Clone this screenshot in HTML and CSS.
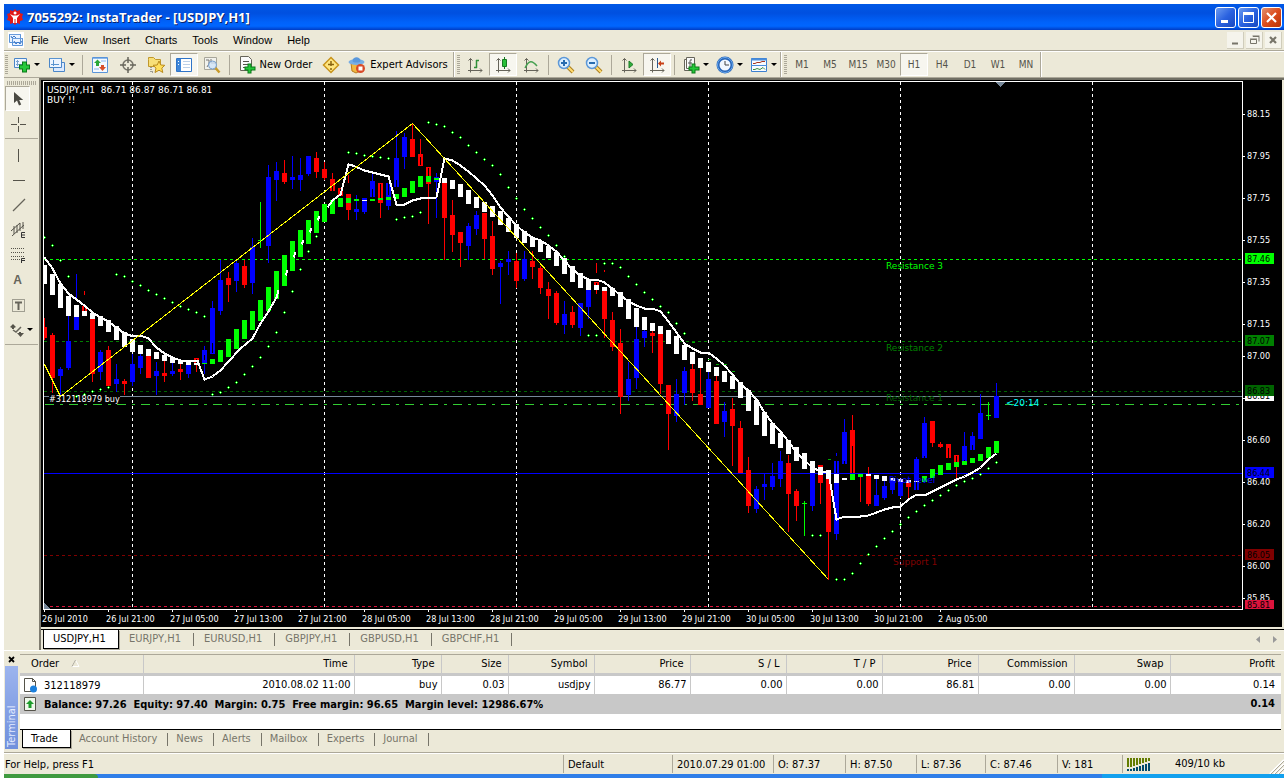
FILE: index.html
```html
<!DOCTYPE html>
<html lang="en">
<head>
<meta charset="utf-8">
<title>7055292: InstaTrader - [USDJPY,H1]</title>
<link rel="stylesheet" href="styles.css">
</head>
<body>
<div class="window">
  <header class="titlebar">
    <svg class="logo" width="16" height="16" viewBox="0 0 16 16"><path d="M8 0l2 2 3-1v3l3 1-1 3 1 3-3 1v3l-3-1-2 2-2-2-3 1v-3l-3-1 1-3-1-3 3-1v-3l3 1z" fill="#e01818"/><path d="M3 5l3 1.500h4l3-1.500-3 4v5H8.500v-4h-1v4H6V9zM8 2.500a1.500 1.500 0 1 0 .1 0z" fill="#fff"/></svg>
    <h1>7055292: InstaTrader - [USDJPY,H1]</h1>
    <button class="cap" aria-label="Minimize"><svg width="19" height="19"><path d="M5 13.500h7" stroke="#fff" stroke-width="3"/></svg></button>
    <button class="cap" aria-label="Maximize"><svg width="19" height="19"><path d="M4 5.500h11" stroke="#fff" stroke-width="3"/><path d="M4.500 5v9.500h10V5" fill="none" stroke="#fff"/></svg></button>
    <button class="cap close" aria-label="Close"><svg width="19" height="19"><path d="M5 5l9 9M14 5l-9 9" stroke="#fff" stroke-width="2.200"/></svg></button>
  </header>

  <nav class="menubar">
    <svg class="menu-icon" width="16" height="16"><path fill="#fff" d="M0 0h16v16H0z"/><path d="M1.500 2.500h11v8h-11zM4.500 6.500h10v7h-10z" fill="#eaf3ff" stroke="#5a94d8"/><path d="M1 2.500h12M4 6.500h11" stroke="#6a9cdc"/><path d="M6 9l2 3 2-2 2 2 2-3M3 4l1 2 2-2 2 2" fill="none" stroke="#3c78c8"/></svg>
    <button>File</button><button>View</button><button>Insert</button><button>Charts</button><button>Tools</button><button>Window</button><button>Help</button>
    <span class="fill"></span>
    <button class="mdi" aria-label="Minimize chart"><svg width="17" height="17"><path d="M5 11.500h6" stroke="#77756a" stroke-width="2"/></svg></button>
    <button class="mdi" aria-label="Restore chart"><svg width="17" height="17"><path d="M4.500 7.500h6v4h-6zM4 7h7M7 4.500h6v5M6.500 4h7" fill="none" stroke="#77756a"/></svg></button>
    <button class="mdi" aria-label="Close chart"><svg width="17" height="17"><path d="M5 5l6 6M11 5l-6 6" stroke="#77756a" stroke-width="2.200"/></svg></button>
  </nav>

  <div class="toolbar">
    <div class="group">
      <i class="grip"></i>
      <button class="drop" aria-label="New chart"><svg width="18" height="18"><path d="M1.500 2.500h12v9h-12z" fill="#eef5ff" stroke="#4a86c8"/><path d="M4.500 4v6M3 8.500h7M3 5.500h3" stroke="#78a2d0"/><path d="M11.500 5.500v11M6 11h11" stroke="#0b7a18" stroke-width="5"/><path d="M11.500 6.500v9M7 11h9" stroke="#25c83a" stroke-width="3"/></svg></button>
      <button class="drop" aria-label="Profiles"><svg width="18" height="18"><path d="M5.500 6.500h11v9h-11z" fill="#dceaff" stroke="#4a86c8"/><path d="M1.500 2.500h12v9h-12z" fill="#eef5ff" stroke="#4a86c8"/><path d="M1 2.500h13M3 8.500h8M5.500 4v6" stroke="#5a94d0"/></svg></button>
      <i class="sep"></i>
      <button aria-label="Market watch"><svg width="16" height="16"><path d="M.5.5h15v15H.5z" fill="#f4f9ff" stroke="#5a94d8"/><path d="M1 1.500h14M9 4h5M2 12h5" stroke="#8ab8ec"/><path d="M5.500 2.500L9 6H7v3H4V6H2z" fill="#2aa838"/><path d="M10.500 14l3.500-4h-2V8H9v2H7z" fill="#d8502a"/></svg></button>
      <button aria-label="Data window"><svg width="18" height="18"><circle cx="9" cy="9" r="5" fill="none" stroke="#77756a" stroke-width="1.500"/><path d="M9 1v6M9 11v6M1 9h6M11 9h6" stroke="#66645a" stroke-width="1.500"/></svg></button>
      <button aria-label="Navigator"><svg width="18" height="18"><path d="M1.500 3.500V1.500h5l2 2h5v7h-12z" fill="#f8df78" stroke="#c0982c"/><path d="M4 11v5h3" fill="none" stroke="#555" stroke-dasharray="1 1"/><path d="M12 5l1.800 4 4 .3-3 2.800 1 4.400-3.800-2.300L8 16.500l1-4.400-3-2.800 4.200-.3z" fill="#ffdf5c" stroke="#b98a1c"/></svg></button>
      <button class="on" aria-label="Terminal"><svg width="16" height="16"><path d="M.5 1.500h15v13H.5z" fill="#fff" stroke="#2f74c8"/><path d="M1 2h4v12H1z" fill="#3f86d8"/><path d="M7 4.500h7M7 7.500h7M7 10.500h7" stroke="#bcd0e8"/><path d="M2 4.500h1M2 7.500h1" stroke="#fff"/></svg></button>
      <button aria-label="Strategy tester"><svg width="18" height="18"><path d="M1.500 1.500h12v12h-12z" fill="#f2f2ec" stroke="#a8a69a"/><path d="M3 4h3v5M8 3v4h4M4 11l3-5" fill="none" stroke="#777"/><circle cx="9.500" cy="9" r="4" fill="#cfe4fa" fill-opacity=".8" stroke="#7aa0cc"/><path d="M12.500 12l4 4.500" stroke="#c89a28" stroke-width="2.500"/></svg></button>
      <i class="sep"></i>
      <button class="label order"><svg width="18" height="18"><path d="M2.500.5h8l3 3v11h-11z" fill="#fafafa" stroke="#66645a"/><path d="M5 5.500h6M5 8.500h6M5 11.500h4" stroke="#55534a"/><path d="M11.500 7.500v10M6.500 12.500h11" stroke="#0b7a18" stroke-width="4"/><path d="M11.500 8.500v8M7.500 12.500h9" stroke="#25c83a" stroke-width="2"/></svg>New Order</button>
      <button aria-label="Metaeditor"><svg width="18" height="18"><path d="M9 1.500L16.500 9 9 16.500 1.500 9z" fill="#ffe680" stroke="#c8941c" stroke-width="1.500"/><path d="M9 5v5M6 8.500h6M9 12v2" stroke="#8a6410" stroke-width="1.500"/></svg></button>
      <button class="label advisors"><svg width="18" height="18"><path d="M3 7l9 1v7l-4 2-4-2z" fill="#f0b840" stroke="#b97a1c"/><ellipse cx="8.500" cy="6" rx="8" ry="3" fill="#78aee4"/><path d="M4.500 5c0-5 8-5 8 0 0 2-8 2-8 0z" fill="#5a98dc"/><circle cx="12.500" cy="12.500" r="4.500" fill="#d84a28"/><path d="M10.500 10.500h4v4h-4z" fill="#fff"/></svg>Expert Advisors</button>
    </div>
    <div class="group">
      <i class="grip"></i>
      <button aria-label="Bar chart"><svg width="16" height="16"><path d="M3.500 1.500v14M1 13.500h14M1.500 3.500l2-2 2 2M13 11.500l2 2-2 2" fill="none" stroke="#66645a"/><path d="M9.500 3v8M9 3.500h3M7 10.500h3" stroke="#2f9038" stroke-width="1.500"/></svg></button>
      <button class="on" aria-label="Candlesticks"><svg width="16" height="16"><path d="M3.500 1.500v14M1 13.500h14M1.500 3.500l2-2 2 2M13 11.500l2 2-2 2" fill="none" stroke="#66645a"/><path d="M9.500 0v12" stroke="#167a20"/><path d="M7.500 2.500h4v7h-4z" fill="#28c038" stroke="#167a20"/></svg></button>
      <button aria-label="Line chart"><svg width="16" height="16"><path d="M3.500 1.500v14M1 13.500h14M1.500 3.500l2-2 2 2M13 11.500l2 2-2 2" fill="none" stroke="#66645a"/><path d="M2 11C6 3 9 3 14 9" fill="none" stroke="#45a050" stroke-width="1.500"/></svg></button>
      <i class="sep"></i>
      <button aria-label="Zoom in"><svg width="18" height="18"><path d="M10 10l6 6" stroke="#ad8120" stroke-width="4"/><path d="M10 10l6 6" stroke="#ffdc70" stroke-width="2"/><circle cx="7" cy="7" r="5.500" fill="#dcefff" stroke="#5c98d8" stroke-width="1.500"/><path d="M4 7h6M7 4v6" stroke="#276cb0" stroke-width="2"/></svg></button>
      <button aria-label="Zoom out"><svg width="18" height="18"><path d="M10 10l6 6" stroke="#ad8120" stroke-width="4"/><path d="M10 10l6 6" stroke="#ffdc70" stroke-width="2"/><circle cx="7" cy="7" r="5.500" fill="#dcefff" stroke="#5c98d8" stroke-width="1.500"/><path d="M4 7h6" stroke="#276cb0" stroke-width="2"/></svg></button>
      <i class="sep"></i>
      <button aria-label="Auto scroll"><svg width="16" height="16"><path d="M3.500 1.500v14M1 13.500h14M1.500 3.500l2-2 2 2M13 11.500l2 2-2 2" fill="none" stroke="#66645a"/><path d="M8 4l4 3.500L8 11z" fill="#2fae3c" stroke="#1c7a26"/></svg></button>
      <button class="on" aria-label="Chart shift"><svg width="16" height="16"><path d="M3.500 1.500v14M1 13.500h14M1.500 3.500l2-2 2 2M13 11.500l2 2-2 2" fill="none" stroke="#66645a"/><path d="M8.500 1v10" stroke="#2a5a90"/><path d="M9 6.500l3-3v2h3v2h-3v2z" fill="#c84018"/></svg></button>
      <i class="sep"></i>
      <button class="drop" aria-label="Indicators"><svg width="18" height="18"><path d="M2.500 3.500v11h8v-11z" fill="#fafafa" stroke="#66645a"/><path d="M4.500 1.500h8v11h-8z" fill="#fafafa" stroke="#66645a"/><path d="M8 11V5q0-2 2-1M6 7h4" fill="none" stroke="#555"/><path d="M11.500 7.500v10M6.500 12.500h11" stroke="#0b7a18" stroke-width="4"/><path d="M11.500 8.500v8M7.500 12.500h9" stroke="#25c83a" stroke-width="2"/></svg></button>
      <button class="drop" aria-label="Periods"><svg width="18" height="18"><circle cx="9" cy="9" r="7" fill="#f0f7ff" stroke="#2664b8" stroke-width="3"/><circle cx="9" cy="9" r="7.500" fill="none" stroke="#69a8ec"/><path d="M9 5v4h4" fill="none" stroke="#444"/></svg></button>
      <button class="drop" aria-label="Templates"><svg width="18" height="18"><path d="M1.500 2.500h15v13h-15z" fill="#f8fbff" stroke="#3c80d0"/><path d="M1 3.500h16" stroke="#4a8edc" stroke-width="2"/><path d="M1 9.500h16" stroke="#4a8edc"/><path d="M3 7.500h2l2-1h3l2-1h3" fill="none" stroke="#a83820"/><path d="M3 13.500h2l2-1 3 1 3-2 2 2" fill="none" stroke="#3c9040"/></svg></button>
    </div>
    <div class="group periods">
      <i class="grip"></i>
      <button>M1</button><button>M5</button><button>M15</button><button>M30</button><button class="on">H1</button><button>H4</button><button>D1</button><button>W1</button><button>MN</button>
    </div>
  </div>

  <div class="workspace">
    <div class="sidebar">
      <i class="hgrip"></i>
      <button class="on" aria-label="Cursor"><svg width="16" height="16"><path d="M4 1v11l3-2.500 2 5 2.200-1-2-4.500h4z" fill="#4a4942"/></svg></button>
      <button aria-label="Crosshair"><svg width="16" height="16"><path d="M8.500 1v6M8.500 10v6M1 8.500h6M10 8.500h6" stroke="#55534a"/></svg></button>
      <i class="hsep"></i>
      <button aria-label="Vertical line"><svg width="16" height="16"><path d="M8.500 2v13" stroke="#55534a"/></svg></button>
      <button aria-label="Horizontal line"><svg width="16" height="16"><path d="M3 8.500h12" stroke="#55534a"/></svg></button>
      <button aria-label="Trendline"><svg width="16" height="16"><path d="M3 14L15 2" stroke="#66645a" stroke-width="1.200"/></svg></button>
      <button aria-label="Equidistant channel"><svg width="16" height="16"><path d="M1 9l9-8M2 14L14 3M4 4v8M7 3v8M10 1v8M13 0v7" stroke="#55534a"/><path d="M15 10.500h-3.500v5H15M12 13h3" fill="none" stroke="#333"/></svg></button>
      <button aria-label="Fibonacci retracement"><svg width="16" height="16"><path d="M1 1.500h14M1 5.500h14M1 9.500h14M1 12.500h9" stroke="#55534a" stroke-dasharray="1 1"/><path d="M15 11.500h-3.500v5M12 13.500h3" fill="none" stroke="#333"/></svg></button>
      <button class="letter">A</button>
      <button aria-label="Text label"><svg width="16" height="16"><path d="M2.500 2.500h12v12h-12z" fill="none" stroke="#55534a" stroke-dasharray="1 1"/><path d="M5 5.500h7M8.500 5v8" stroke="#66645a" stroke-width="2"/></svg></button>
      <button class="drop" aria-label="Arrows"><svg width="16" height="16"><path d="M1 5l3-3 3 3-2 1v1H3V6zM8 11h2v-1h2v1h3l-3.500 4z" fill="#55534a"/><path d="M4 8l3 2 5-5" fill="none" stroke="#66645a" stroke-width="1.500"/></svg></button>
      <i class="hsep"></i>
    </div>
    <main class="main">
      <svg class="chart" viewBox="41 80 1241 547" role="img" aria-label="USDJPY hourly chart">
        <defs>
          <clipPath id="plot"><path d="M44 82h1198v527H44z"/></clipPath>
          <marker id="sar" markerWidth="3" markerHeight="3" refX="1.500" refY="1.500" markerUnits="userSpaceOnUse"><path d="M0 1.500h3M1.500 0v3" stroke="#0f0"/><path d="M1 1h1v1H1z" fill="#fff"/></marker>
        </defs>
        <path d="M41 80h1241v547H41z" fill="#000"/>
        <g clip-path="url(#plot)" shape-rendering="crispEdges" fill="none">
          <path d="M132.500 82v527M324.500 82v527M516.500 82v527M708.500 82v527M900.500 82v527M1092.500 82v527" stroke="#fff" stroke-dasharray="3 3"/>
          <path d="M44 259.500h1198" stroke="#0f0" stroke-dasharray="3 3"/>
          <path d="M44 341.500h1198" stroke="#008000" stroke-dasharray="3 3"/>
          <path d="M44 391.500h1198" stroke="#006400" stroke-dasharray="3 3"/>
          <path d="M44 555.500h1198" stroke="#800000" stroke-dasharray="3 3"/>
          <path d="M44 606.500h1198" stroke="#dc143c" stroke-dasharray="3 3"/>
          <path d="M45 404.500h1198" stroke="#32cd32" stroke-dasharray="9 6 3 6"/>
          <path d="M44 396.500h5M120 396.500h1122" stroke="#778899"/>
          <path d="M44 473.500h1198" stroke="#00f"/>
          <g transform="translate(.5 0)">
            <path stroke="#00f" d="M60 367v29M68 316v54M76 274v26M100 350v30M116 364v28M132 354v32M140 354v20M156 362v33M172 363v13M188 365v13M204 346v28M212 301v53M220 260v55M236 260v32M252 238v56M268 165v98M276 162v39M292 156v33M300 158v33M308 156v20M356 195v25M364 198v16M372 174v23M388 183v27M396 131v56M404 133v36M436 173v45M468 223v37M476 211v24M500 261v43M508 251v24M524 251v30M564 301v33M580 303v33M588 290v29M628 362v39M636 327v62M644 330v17M676 379v43M684 367v38M708 372v36M724 402v35M756 486v27M764 474v26M772 463v27M780 451v36M812 473v38M836 453v3M836 483v57M844 419v45M876 479v27M884 481v19M892 480v14M900 480v18M916 457v33M924 417v41M964 432v33M972 432v18M980 394v45M996 383v35"/>
            <path stroke="#00f" stroke-width="5" d="M60 369v7M68 341v27M76 317v13M100 352v20M116 379v5M132 364v18M140 356v12M156 371v5M172 371v3M188 365v9M204 350v14M212 308v46M220 280v31M236 263v18M252 247v36M268 177v69M276 171v9M292 177v3M300 175v5M308 156v18M356 209v3M364 198v14M372 181v16M388 183v23M396 158v29M404 137v20M436 177v5M468 226v20M476 215v14M500 263v4M508 259v3M524 259v20M564 314v11M580 303v25M588 290v17M628 379v16M636 339v39M644 331v7M676 394v22M684 371v22M708 379v29M724 411v11M756 489v20M764 484v3M772 476v11M780 461v18M812 473v33M836 461v73M844 432v32M876 495v11M884 486v12M892 481v9M900 482v14M916 459v31M924 423v35M964 446v19M972 436v14M980 413v26M996 396v22"/>
            <path stroke="#f00" d="M44 318v22M52 333v60M84 291v4M92 319v63M108 346v40M124 379v16M148 356v22M164 361v21M180 364v16M196 358v14M228 272v30M244 260v28M284 160v24M316 152v26M324 162v18M332 173v18M348 175v8M348 194v26M380 183v35M412 123v34M420 139v27M428 167v57M444 183v77M452 200v52M460 232v35M484 213v46M492 221v54M516 253v35M532 251v28M540 266v28M548 282v37M556 291v34M572 306v22M596 263v10M596 282v12M604 270v2M604 291v47M612 312v39M620 329v85M652 331v22M660 334v60M668 385v65M692 364v37M700 368v37M716 376v48M732 398v68M740 421v52M748 457v56M788 455v77M796 489v32M820 465v39M828 479v101M852 415v58M860 477v25M868 467v39M908 482v16M932 421v26M940 442v6M956 455v24"/>
            <path stroke="#f00" stroke-width="5" d="M44 327v11M52 335v43M84 306v10M92 319v55M108 350v36M124 381v3M148 356v22M164 373v3M180 369v3M196 358v6M228 278v7M244 266v19M284 173v9M316 158v14M324 169v9M332 179v12M340 188v8M348 194v16M380 183v20M412 139v18M420 154v12M428 167v17M444 183v35M452 215v20M460 232v11M484 213v26M492 236v33M516 261v20M532 261v6M540 268v20M548 289v7M556 293v30M572 312v13M596 282v5M604 291v28M612 320v27M620 343v54M652 333v3M660 334v50M668 385v29M692 369v24M700 394v11M716 381v43M732 409v17M740 428v45M748 470v36M788 463v31M796 491v15M820 465v18M828 479v53M852 430v43M868 475v29M908 483v4M932 421v22M940 444v3M948 444v14M956 455v7"/>
            <path stroke="#000" d="M84 307v4M196 359v6M204 355v5M212 343v10M332 186v5M340 189v7M372 189v8M380 184v14M388 183v12M396 180v7M420 157v8M428 168v9M596 283v4M820 467v4M836 461v12M844 461v3M852 446v27M916 482v8M924 456v2M948 448v10M956 456v6M964 460v5M972 445v5"/>
            <path stroke="#0f0" d="M260 202v46M804 501v35M988 402v18"/>
            <path stroke="#0f0" stroke-width="5" d="M260 240v1M804 503v1M988 415v1"/>
            <path stroke="#fff" stroke-width="5" d="M44 265v19M52 274v21M60 284v24M68 296v20M76 305v12M84 311v5M92 313v6M100 316v10M108 320v12M116 326v14M124 332v15M132 339v13M140 345v9M148 349v7M156 352v7M164 355v6M172 358v5M180 360v4M188 362v3M196 363v2M364 200v1M444 178v5M452 180v9M460 184v13M468 190v14M476 197v11M484 202v10M492 206v11M500 211v14M508 218v14M516 224v14M524 231v12M532 237v10M540 241v11M548 246v12M556 252v14M564 258v16M572 266v16M580 273v15M588 280v10M596 285v5M604 287v4M612 288v8M620 292v15M628 299v20M636 308v19M644 317v13M652 323v8M660 326v8M668 330v14M676 336v18M684 345v15M692 352v12M700 358v10M708 362v10M716 367v9M724 371v11M732 376v13M740 382v16M748 390v21M756 400v25M764 412v24M772 423v21M780 433v15M788 440v14M796 447v14M804 453v16M812 461v12M820 467v8M828 470v9M836 474v9M844 478v2M868 474v2M876 475v4M884 476v5M892 478v3M900 479v3M908 480v3M916 481v1"/>
            <path stroke="#0f0" stroke-width="5" d="M204 363v1M212 359v5M220 350v12M228 339v18M236 329v20M244 320v19M252 311v19M260 300v21M268 287v24M276 271v28M284 255v31M292 241v30M300 230v27M308 220v24M316 211v22M324 204v18M332 200v14M340 198v9M348 198v5M356 199v2M372 199v2M380 198v2M388 197v3M396 194v5M404 188v9M412 181v12M420 176v11M428 176v6M436 178v2M852 474v6M860 474v3M924 476v6M932 469v9M940 465v10M948 463v7M956 462v5M964 461v4M972 458v5M980 454v7M988 447v11M996 441v12"/>
          </g>
          <g transform="translate(.5 .5)">
            <path stroke="#fff" stroke-width="2" d="M44 257L52 268 60 283 68 293 76 299 84 305 92 312 100 317 108 321 116 327 124 333 130 335 140 335 148 338 156 347 164 353 172 357 180 360 197 360 204 379 212 376 220 370 228 361 240 348"/>
            <path stroke="#fff" stroke-width="2" d="M240 348L252 338 260 323 268 311 276 297M276 297L278 290M285 275L287 270M293 257L295 252M301 244L303 240M309 232L311 228M317 220L319 216M327 207L332 200 340 194 348 164 352 165 364 170 380 174 388 176 396 204 404 204 412 200 420 198 436 197 444 158 452 160 460 165 468 171 476 178 484 185 492 195 500 207 508 216 516 225 524 232 532 237 540 240 548 245 556 251 564 260 572 269 580 275 588 279 596 279 604 282 612 288 620 295 628 301 636 305 644 308 652 308 660 311 668 321 676 332 684 343 692 348 700 352 708 352 716 358 724 365 732 374 740 384 748 390 756 399 764 412 772 423 780 431 788 441 796 452 804 460 812 467 820 471 828 471 836 519 844 516 860 516 868 515 876 512 884 509 892 507 900 506 908 499 916 494 926 494 940 487 948 483 956 479 964 476 972 472 980 467 988 459 996 453"/>
            <path stroke="#ff0" d="M44 364L60 396 412 123 828 579"/>
            <path stroke="none" marker-start="url(#sar)" marker-mid="url(#sar)" marker-end="url(#sar)" d="M44 237L52 245 60 260 68 276 76 396 84 394 92 391 100 389 108 387 116 274 124 276 132 281 140 285 148 290 156 294 164 298 172 302 180 306 188 309 196 312 204 316 212 394 220 392 228 387 236 382 244 374 252 366 260 357 268 346 276 332 284 312 292 291 300 269 308 251 316 236 348 152 356 153 364 155 372 156 380 157 388 158 396 219 404 217 412 216 420 212 428 122 436 124 444 126 452 132 460 137 468 145 476 152 484 159 492 165 500 174 508 187 516 198 524 209 532 218 540 227 548 235 556 245 564 256 588 335 596 335 604 263 612 263 620 267 628 276 636 284 644 292 652 299 660 306 668 312 676 323 684 333 812 535 820 535 836 579 844 579 852 573 860 563 868 554 876 546 884 538 892 531 900 524 908 517 916 511 924 505 932 500 940 495 948 490 956 485 964 481 972 478 980 474 988 468 996 462"/>
            <path stroke="#0a0" d="M691 342h3M707 359h3M715 364h3M723 364h3M731 371h3M827 459h3"/>
          </g>
        </g>
        <g shape-rendering="crispEdges">
          <path d="M43.500 609V81.500h1199V609.500H43" fill="none" stroke="#fff"/>
          <path d="M995 82h10l-5 5zM44 603l6 6h-6z" fill="#778899"/>
          <path d="M1243 114.500h2M1243 156.500h2M1243 198.500h2M1243 240.500h2M1243 282.500h2M1243 324.500h2M1243 356.500h2M1243 398.500h2M1243 440.500h2M1243 482.500h2M1243 524.500h2M1243 566.500h2M1243 598.500h2M44.500 610v2M108.500 610v2M172.500 610v2M236.500 610v2M300.500 610v2M364.500 610v2M428.500 610v2M492.500 610v2M556.500 610v2M620.500 610v2M684.500 610v2M748.500 610v2M812.500 610v2M876.500 610v2M940.500 610v2" stroke="#fff"/>
        </g>
        <g class="tick" fill="#fff">
          <g class="info"><text x="47" y="93">USDJPY,H1&nbsp; 86.71 86.87 86.71 86.81</text><text x="47" y="103">BUY !!</text></g><text x="49" y="402">#312118979 buy</text>
          <text x="1247" y="117">88.15</text><text x="1247" y="159">87.95</text><text x="1247" y="201">87.75</text><text x="1247" y="243">87.55</text><text x="1247" y="285">87.35</text><text x="1247" y="327">87.15</text><text x="1247" y="359">87.00</text><text x="1247" y="443">86.60</text><text x="1247" y="485">86.40</text><text x="1247" y="527">86.20</text><text x="1247" y="569">86.00</text><text x="1247" y="601">85.85</text>
          <text x="42" y="622">26 Jul 2010</text><text x="106" y="622">26 Jul 21:00</text><text x="170" y="622">27 Jul 05:00</text><text x="234" y="622">27 Jul 13:00</text><text x="298" y="622">27 Jul 21:00</text><text x="362" y="622">28 Jul 05:00</text><text x="426" y="622">28 Jul 13:00</text><text x="490" y="622">28 Jul 21:00</text><text x="554" y="622">29 Jul 05:00</text><text x="618" y="622">29 Jul 13:00</text><text x="682" y="622">29 Jul 21:00</text><text x="746" y="622">30 Jul 05:00</text><text x="810" y="622">30 Jul 13:00</text><text x="874" y="622">30 Jul 21:00</text><text x="938" y="622">2 Aug 05:00</text>
        </g>
        <path d="M1245 253h29v11h-29z" fill="#0f0"/><path d="M1245 335h29v11h-29z" fill="#008000"/><path d="M1245 390h29v11h-29z" fill="#fff"/>
        <text class="tick" x="1247" y="399">86.81</text>
        <path d="M1245 385h29v11h-29z" fill="#006400"/><path d="M1245 467h29v11h-29z" fill="#00f"/><path d="M1245 549h29v11h-29z" fill="#800000"/><path d="M1245 600h29v9h-29z" fill="#dc143c"/>
        <g class="tick"><text x="1247" y="262">87.46</text><text x="1247" y="344">87.07</text><text x="1247" y="394">86.83</text><text x="1247" y="476">86.44</text><text x="1247" y="558">86.05</text><text x="1247" y="608">85.81</text></g>
        <g class="level"><text x="886" y="269" fill="#0f0">Resistance 3</text><text x="886" y="351" fill="#008000">Resistance 2</text><text x="886" y="401" fill="#006400">Resistance 1</text><text x="889" y="483" fill="#00f">Pivot level</text><text x="893" y="565" fill="#800000">Support 1</text><text x="1006" y="406" fill="#0ff">&lt;20:14</text></g>
      </svg>
      <div class="tabs charts">
        <button class="active">USDJPY,H1</button><button>EURJPY,H1</button><button>EURUSD,H1</button><button>GBPJPY,H1</button><button>GBPUSD,H1</button><button>GBPCHF,H1</button>
        <span class="fill"></span>
        <button class="scroll" aria-label="Scroll left"><svg width="17" height="9"><path d="M10 1v7L6 4.500z" fill="#999"/></svg></button>
        <button class="scroll" aria-label="Scroll right"><svg width="17" height="9"><path d="M6 1v7l4-3.500z" fill="#999"/></svg></button>
      </div>
    </main>
  </div>

  <section class="terminal">
    <div class="rail">
      <button aria-label="Close terminal"><svg width="8" height="8"><path d="M1 1l5 5M6 1l-5 5" stroke="#000" stroke-width="1.800"/></svg></button>
      <span>Terminal</span>
    </div>
    <div class="panel">
      <table>
        <colgroup><col class="w123"><col class="w211"><col class="w87"><col class="w67"><col class="w86"><col class="w96"><col class="w96"><col class="w96"><col class="w96"><col class="w96"><col class="w96"><col></colgroup>
        <thead><tr><th>Order <svg width="9" height="9"><path d="M1 7.500L4.500 1 8 7.500z" fill="none" stroke="#fff"/><path d="M1 7.500L4.500 1" stroke="#aca899"/></svg></th><th>Time</th><th>Type</th><th>Size</th><th>Symbol</th><th>Price</th><th>S / L</th><th>T / P</th><th>Price</th><th>Commission</th><th>Swap</th><th>Profit</th></tr></thead>
        <tbody>
          <tr><td><svg width="16" height="16"><path d="M1.500 1.500h8l3 3v10h-11z" fill="#fff" stroke="#55534a"/><path d="M9.500 1.500v3h3" fill="none" stroke="#55534a"/><circle cx="10.500" cy="12" r="3.500" fill="#1c80dc"/></svg>312118979</td><td>2010.08.02 11:00</td><td>buy</td><td>0.03</td><td>usdjpy</td><td>86.77</td><td>0.00</td><td>0.00</td><td>86.81</td><td>0.00</td><td>0.00</td><td>0.14</td></tr>
          <tr class="sum"><td colspan="11"><svg width="16" height="16"><path d="M1.500 1.500h11v13h-11z" fill="#eef7ea" stroke="#55534a"/><path d="M7 4l4 4H8.500v4h-3V8H3z" fill="#1c9c2a"/></svg>Balance: 97.26&nbsp; Equity: 97.40&nbsp; Margin: 0.75&nbsp; Free margin: 96.65&nbsp; Margin level: 12986.67%</td><td>0.14</td></tr>
        </tbody>
      </table>
      <div class="tabs lower">
        <button class="active">Trade</button><button>Account History</button><button>News</button><button>Alerts</button><button>Mailbox</button><button>Experts</button><button>Journal</button>
      </div>
    </div>
  </section>

  <footer class="status">
    <span class="fill help">For Help, press F1</span><span class="w109">Default</span><span class="w101">2010.07.29 01:00</span><span class="w72">O: 87.37</span><span class="w71">H: 87.50</span><span class="w69">L: 87.36</span><span class="w72">C: 87.46</span><span class="w65">V: 181</span>
    <span class="net"><svg width="24" height="13" shape-rendering="crispEdges"><path d="M1 0v9M4 0v9M7 0v8M10 0v7M13 0v6M16 0v5M19 0v4M22 0v3" stroke="#637c00" stroke-width="2"/><path d="M1 11v2M4 11v2M7 10v3M10 9v4M13 8v5M16 7v6M19 6v7M22 5v8" stroke="#004a6c" stroke-width="2"/></svg>409/10 kb</span>
    <svg class="resize" width="15" height="15"><path d="M1 15L15 1M5 15L15 5M9 15l6-6M13 15l2-2" stroke="#fff" stroke-width="2"/><path d="M2 15L15 2M6 15l9-9M10 15l5-5" stroke="#aca899"/></svg>
  </footer>
  <div class="taskbar"><i class="start"></i><i class="fill"></i><i class="tray"></i></div>
</div>
</body>
</html>
```
FILE: styles.css
```css
* { box-sizing: border-box; }
body { margin: 0; background: #fff; color: #000; font: 11px/14px "DejaVu Sans Condensed", "Noto Sans", sans-serif; }
button { margin: 0; padding: 0; border: 0; background: none; color: inherit; font: inherit; white-space: nowrap; }
svg { display: block; flex: none; }
.window { margin: 4px 4px 0; background: #ece9d8; }
.fill { flex: 1; }

.titlebar { display: flex; align-items: center; gap: 2px; height: 26px; padding: 0 2px 0 3px; background: linear-gradient(#0058e6, #0050e0 35%, #0062fa 70%, #0066ff 85%, #003cc4); }
.titlebar h1 { flex: 1; margin: 0 0 0 2px; color: #fff; font: bold 13px/20px "Open Sans", sans-serif; text-shadow: 1px 1px #0a246a; }
.cap { display: grid; place-items: center; width: 21px; height: 21px; border: 1px solid #fff; border-radius: 3px; background: linear-gradient(135deg, #6d9cf0, #2a62e0 50%, #1848c0); }
.cap.close { background: linear-gradient(135deg, #e09070, #dc4c1c 50%, #b83408); }

.menubar { display: flex; align-items: center; height: 21px; padding: 0 2px 0 4px; border-bottom: 1px solid #aca899; font: 11px/16px "Liberation Sans", sans-serif; }
.menubar button { padding: 0 8px 0 7px; }
.menu-icon { width: 16px; }
.menubar .mdi { width: 17px; height: 17px; margin-left: 2px; padding: 0; background: #f5f4ec; border-right: 1px solid #d0cdbc; border-bottom: 1px solid #d0cdbc; }

.toolbar { display: flex; height: 27px; border-top: 1px solid #fff; border-bottom: 1px solid #aca899; }
.group { display: flex; align-items: center; height: 25px; padding: 0 2px 0 1px; border-right: 1px solid #aca899; box-shadow: 1px 0 #fff; }
.group + .group { padding: 0 0 0 3px; }
.grip { width: 3px; height: 19px; margin-right: 1px; background: repeating-linear-gradient(#aca899 0 1px, transparent 1px 2px); }
.sep { width: 1px; height: 20px; margin: 0 3px; background: #aca899; }
.group button { display: flex; align-items: center; justify-content: center; width: 28px; height: 23px; border: 1px solid transparent; }
.group button.on, .sidebar button.on { border: 1px solid #fff; border-top-color: #aca899; border-left-color: #aca899; background: #f7f6ef; }
.group .drop { gap: 3px; width: 35px; }
.group + .group .drop { width: 34px; }
.drop::after { content: ""; border: 3px solid transparent; border-top-color: #000; border-bottom: 0; }
.group .label { gap: 4px; }
.group .order { width: 84px; }
.group .advisors { width: 106px; }
.periods { color: #55534a; font-size: 10px; }

.workspace { display: flex; }
.sidebar { display: flex; flex-direction: column; width: 35px; padding: 3px 1px 0; }
.hgrip { height: 4px; width: 30px; margin: 0 2px 1px; background: repeating-linear-gradient(90deg, #aca899 0 1px, transparent 1px 2px); }
.hsep { height: 1px; margin: 2px 0 3px; background: #aca899; }
.sidebar button { display: flex; align-items: center; justify-content: center; width: 25px; height: 25px; }
.sidebar .drop { justify-content: flex-start; gap: 2px; width: 32px; padding-left: 4px; }
.sidebar .letter { color: #66645a; font: bold 12px/16px "Liberation Sans", sans-serif; }
.main { flex: 1; min-width: 0; border-top: 2px solid #716f64; border-left: 2px solid #807d70; }
.chart { width: calc(100% - 2px); height: auto; border-right: 2px solid #ece9d8; box-sizing: content-box; }
.tick { font: 9px "DejaVu Sans Condensed", "Noto Sans", sans-serif; }
.info { font: 9px "DejaVu Sans", "Noto Sans", sans-serif; }
.level { font: 9px "DejaVu Sans", sans-serif; }

.tabs { display: flex; align-items: flex-start; border-top: 1px solid #000; color: #77756a; }
.tabs button { display: flex; align-items: center; height: 18px; padding-left: 8px; }
.tabs button:not(.active):not(.scroll)::after { content: ""; width: 1px; height: 13px; margin-left: 10px; background: #77756a; }
.tabs .active { border: 1px solid #000; border-top: 0; background: #fff; color: #000; box-shadow: 1px 1px #aca899; }
.charts { height: 21px; margin-top: 2px; padding-left: 2px; }
.charts button { padding-left: 10px; }
.charts button:not(.active):not(.scroll)::after { margin-left: 12px; }
.charts .active { width: 76px; height: 19px; padding-left: 9px; }
.tabs .scroll { width: 17px; padding: 0; }

.terminal { display: flex; height: 103px; padding: 3px 3px 3px 1px; border-top: 1px solid #fff; border-bottom: 1px solid #aca899; }
.rail { display: flex; flex-direction: column; width: 15px; }
.rail button { width: 13px; height: 12px; padding: 1px 3px; }
.rail span { flex: 1; width: 13px; background: linear-gradient(#7090dc, #9cb4ee); color: #e4ecff; font-size: 11px; line-height: 13px; writing-mode: vertical-rl; transform: rotate(180deg); padding-top: 2px; }
.panel { flex: 1; min-width: 0; border-top: 1px solid #aca899; background: linear-gradient(#fff 0 75px, #ece9d8 75px); }
table { width: 100%; border-collapse: collapse; table-layout: fixed; }
th, td { padding: 0 3px; border-right: 1px solid #c8c8c8; text-align: right; font-weight: normal; white-space: nowrap; }
th { height: 19px; padding: 0 6px; background: #ece9d8; border-bottom: 3px solid #c8c8c8; }
th:first-child { padding-left: 11px; text-align: left; }
th svg { display: inline-block; margin-left: 9px; vertical-align: -1px; }
td { height: 20px; }
td:first-child { text-align: left; }
td svg { display: inline-block; margin-right: 5px; vertical-align: -4px; }
td:last-child, th:last-child { border-right: 0; padding-right: 6px; }
.sum td { border: 0; background: #c8c8c8; font-weight: bold; }
.lower { margin-top: 15px; }
.lower .active { width: 49px; margin-left: 2px; }
.w123 { width: 123px; } .w211 { width: 211px; } .w87 { width: 87px; } .w67 { width: 67px; } .w86 { width: 86px; } .w96 { width: 96px; }

.status { display: flex; align-items: center; height: 21px; border-top: 1px solid #fff; }
.status span { height: 18px; padding-left: 4px; border-left: 1px solid #aca899; line-height: 20px; white-space: nowrap; }
.status .help { padding-left: 1px; border: 0; }
.w109 { width: 109px; } .w101 { width: 101px; } .w72 { width: 72px; } .w71 { width: 71px; } .w69 { width: 69px; } .w65 { width: 65px; }
.status .net { display: flex; align-items: center; gap: 24px; width: 147px; }
.resize { align-self: flex-end; }
.taskbar { display: flex; height: 4px; background: #2f7ee8; }
.start { width: 94px; background: #3f9a3f; border-radius: 0 4px 0 0; }
.tray { width: 182px; background: #12a0ee; }
```
